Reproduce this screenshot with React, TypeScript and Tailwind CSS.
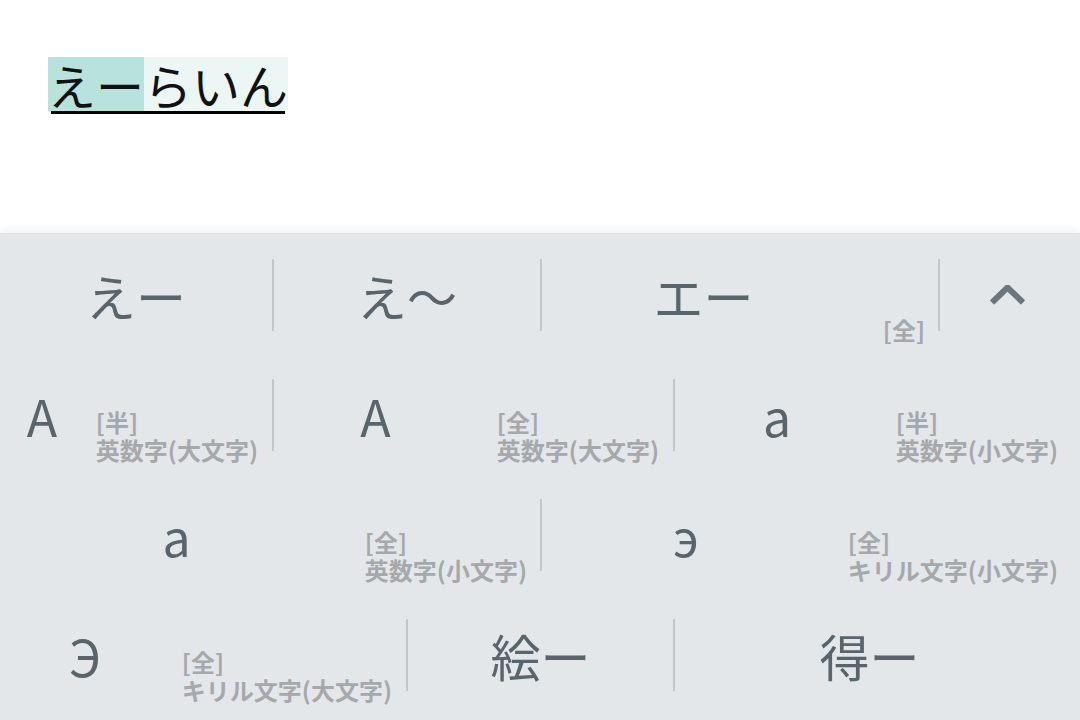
type Cell =
  | { kind: "divider" }
  | {
      kind: "cell";
      cls: string;
      main?: string;
      mainCls?: string;
      tag?: string;
      sub?: string;
      annCls?: string;
      chevron?: boolean;
    };

const D: Cell = { kind: "divider" };

const rows: Cell[][] = [
  [
    { kind: "cell", cls: "w-[272px]", main: "えー", mainCls: "flex-1" },
    D,
    { kind: "cell", cls: "w-[266px]", main: "え〜", mainCls: "flex-1" },
    D,
    { kind: "cell", cls: "w-[396px]", main: "エー", mainCls: "w-[323px]", tag: "[全]", annCls: "mr-[13px]" },
    D,
    { kind: "cell", cls: "flex-1 pr-[5px]", chevron: true },
  ],
  [
    { kind: "cell", cls: "w-[272px]", main: "A", mainCls: "w-[84px]", tag: "[半]", sub: "英数字(大文字)", annCls: "mr-[14px]" },
    D,
    { kind: "cell", cls: "w-[399px]", main: "A", mainCls: "w-[203px]", tag: "[全]", sub: "英数字(大文字)", annCls: "mr-[14px]" },
    D,
    { kind: "cell", cls: "flex-1", main: "a", mainCls: "w-[204px]", tag: "[半]", sub: "英数字(小文字)", annCls: "mr-[22px]" },
  ],
  [
    { kind: "cell", cls: "w-[540px]", main: "a", mainCls: "w-[353px]", tag: "[全]", sub: "英数字(小文字)", annCls: "mr-[13px]" },
    D,
    { kind: "cell", cls: "flex-1", main: "э", mainCls: "w-[288px]", tag: "[全]", sub: "キリル文字(小文字)", annCls: "mr-[22px]" },
  ],
  [
    { kind: "cell", cls: "w-[406px]", main: "Э", mainCls: "w-[170px]", tag: "[全]", sub: "キリル文字(大文字)", annCls: "mr-[14px]" },
    D,
    { kind: "cell", cls: "w-[265px]", main: "絵ー", mainCls: "flex-1" },
    D,
    { kind: "cell", cls: "flex-1 pr-[16px]", main: "得ー", mainCls: "flex-1" },
  ],
];

function Chevron() {
  return (
    <svg width="35" height="20" viewBox="0 0 35 20" className="block">
      <polyline points="2,17.5 17.5,2.5 33,17.5" fill="none" stroke="#6c777b" strokeWidth="6" />
    </svg>
  );
}

function CandidateCell({ cell }: { cell: Cell }) {
  if (cell.kind === "divider") {
    return <div className="w-[2px] h-[72px] shrink-0 bg-[#c3c7c9]" />;
  }
  if (cell.chevron) {
    return (
      <div className={`${cell.cls} h-full flex items-center justify-center`}>
        <Chevron />
      </div>
    );
  }
  return (
    <div className={`${cell.cls} h-full flex shrink-0 items-center`}>
      <div className={`${cell.mainCls} shrink-0 text-center text-[50px] text-[#59656b]`}>{cell.main}</div>
      {cell.tag && (
        <div className={`ml-auto ${cell.annCls} self-end pb-[11px] flex flex-col text-[24px] leading-[28px] font-bold text-[#a5a9ac] whitespace-nowrap`}>
          <span>{cell.tag}</span>
          {cell.sub && <span>{cell.sub}</span>}
        </div>
      )}
    </div>
  );
}

export default function App() {
  return (
    <div className="w-[1080px] h-[720px] overflow-hidden flex flex-col bg-white font-['Noto_Sans_CJK_JP','Noto_Sans',sans-serif]">
      <div className="h-[233px] shrink-0 pl-[48px] pt-[57px]">
        <div className="inline-flex flex-col">
          <div className="flex text-[48px] leading-[54px] text-[#111]">
            <span className="bg-[#b8e3dc]">えー</span>
            <span className="bg-[#ecf6f5]">らいん</span>
          </div>
          <div className="h-[3px] mx-[3px] bg-black" />
        </div>
      </div>
      <div className="flex-1 flex flex-col pt-[1px] bg-[#e3e7ea] shadow-[0_-3px_8px_rgba(0,0,0,0.06)] border-t border-[#dfe2e4]">
        {rows.map((row, i) => (
          <div key={i} className="h-[120px] shrink-0 flex items-center">
            {row.map((cell, j) => (
              <CandidateCell key={j} cell={cell} />
            ))}
          </div>
        ))}
      </div>
    </div>
  );
}
